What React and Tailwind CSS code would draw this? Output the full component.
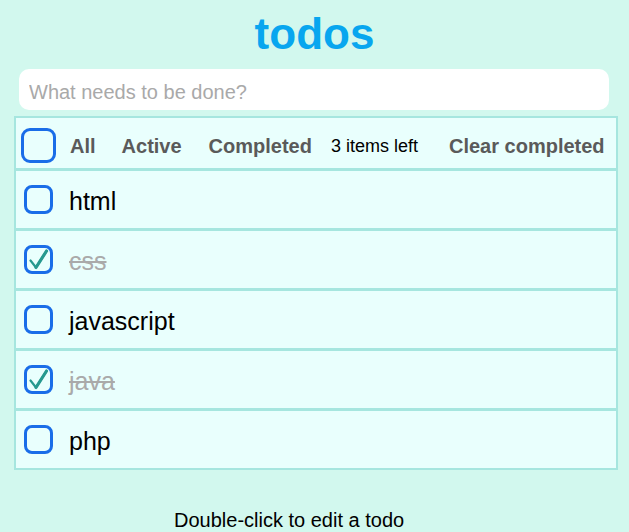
import React, { useState } from 'react';

const initialTodos = [
  { id: 1, title: 'html', done: false },
  { id: 2, title: 'css', done: true },
  { id: 3, title: 'javascript', done: false },
  { id: 4, title: 'java', done: true },
  { id: 5, title: 'php', done: false },
];

const Check = ({ checked, big, onClick }) => (
  <button
    onClick={onClick}
    className={
      big
        ? 'w-[35px] h-[35px] shrink-0 rounded-[9px] border-[3px] border-[#1a6de8] bg-transparent flex items-center justify-center'
        : 'w-[29px] h-[29px] shrink-0 rounded-[8px] border-[3px] border-[#1a6de8] bg-transparent flex items-center justify-center'
    }
  >
    {checked && (
      <svg width="23" height="23" viewBox="0 0 23 23" className="shrink-0">
        <path d="M3.5 12.5 L9 19.5 L19.5 3" fill="none" stroke="#26998f" strokeWidth="2.2" strokeLinecap="round" strokeLinejoin="round" />
        <path d="M9 19.5 L19.5 3" fill="none" stroke="#26998f" strokeWidth="3.2" strokeLinecap="round" />
      </svg>
    )}
  </button>
);

export default function App() {
  const [todos, setTodos] = useState(initialTodos);
  const left = todos.filter(t => !t.done).length;

  const toggle = (id) => setTodos(todos.map(t => (t.id === id ? { ...t, done: !t.done } : t)));

  return (
    <div className="min-h-[532px] bg-[#d2f8ee] font-['Liberation_Sans',Arial,sans-serif] pt-[12px]">
      {/* 標題 */}
      <h1 className="text-center text-[44px] leading-[44px] h-[44px] font-bold text-[#08a6ef]">todos</h1>

      <div className="mt-[13px] ml-[19px] w-[590px] h-[41px] bg-white rounded-[10px] flex items-center px-[10px]">
        <input
          className="w-full outline-none bg-transparent text-[20px] text-[#333] placeholder:text-[#a9a9a9] mt-[4px]"
          placeholder="What needs to be done?"
        />
      </div>

      {/* 清單 */}
      <div className="mt-[6px] ml-[14px] w-[604px] border-2 border-[#a6e6df] bg-[#e9fffd]">
        <div className="h-[53px] flex items-center pl-[5px] border-b-[3px] border-[#a6e6df] text-[20px] leading-[24px] font-bold text-[#5a5a5a]">
          <div className="mt-[4px]">
            <Check big checked={false} />
          </div>
          <span className="ml-[14px] mt-[6px]">All</span>
          <span className="ml-[26px] mt-[6px]">Active</span>
          <span className="ml-[27px] mt-[6px]">Completed</span>
          <span className="ml-[19px] mt-[6px] text-[18px] font-normal text-black">{left} items left</span>
          <span className="ml-[31px] mt-[6px]">Clear completed</span>
        </div>
        {todos.map((t, i) => (
          <div
            key={t.id}
            className={
              'flex items-center pl-[8px] ' +
              (i < todos.length - 1 ? 'h-[60px] border-b-[3px] border-[#a6e6df]' : 'h-[57px]')
            }
          >
            <Check checked={t.done} onClick={() => toggle(t.id)} />
            <span
              className={
                'ml-[16px] text-[25px] leading-[30px] mt-[2px] ' + (t.done ? 'line-through text-[#aaaaaa]' : 'text-black')
              }
            >
              {t.title}
            </span>
          </div>
        ))}
      </div>

      <div className="mt-[39px] pl-[174px] text-[20px] leading-[23px] text-black">Double-click to edit a todo</div>
    </div>
  );
}
